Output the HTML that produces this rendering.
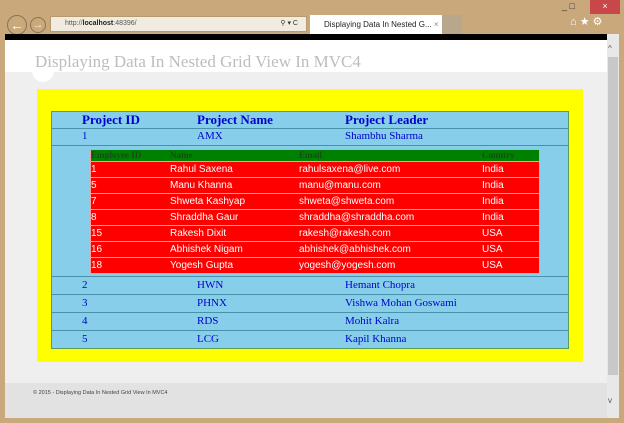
<!DOCTYPE html>
<html><head><style>
*{margin:0;padding:0;box-sizing:border-box}
body{width:624px;height:423px;background:#c9a97b;position:relative;overflow:hidden;font-family:"Liberation Sans",sans-serif}
.abs{position:absolute;white-space:nowrap}
</style></head><body>
<div class="abs" style="left:7px;top:15px;width:20px;height:20px;border:1px solid #8a7350;border-radius:50%;color:#fff;font-size:14px;text-align:center;line-height:18px">&#8592;</div>
<div class="abs" style="left:30px;top:17px;width:16px;height:16px;border:1px solid #8a7350;border-radius:50%;color:#eee;font-size:11px;text-align:center;line-height:14px">&#8594;</div>
<div class="abs" style="left:50px;top:16px;width:257px;height:16px;background:#f2ece0;border:1px solid #b89a70;font-size:7px;color:#555;line-height:14px;padding-left:14px">http://<b style="color:#222">localhost</b>:48396/<span style="position:absolute;right:8px;color:#333">&#9906; ▾ C</span></div>
<div class="abs" style="left:310px;top:15px;width:132px;height:20px;background:#fff;font-size:8px;color:#222;line-height:20px;padding-left:14px">Displaying Data In Nested G... <span style="color:#888">×</span></div>
<div class="abs" style="left:442px;top:15px;width:20px;height:20px;background:#b9a78c"></div>
<div class="abs" style="left:590px;top:0;width:30px;height:14px;background:#c8484a;color:#fff;font-size:9px;text-align:center;line-height:13px">×</div>
<div class="abs" style="left:570px;top:15px;color:#fff;font-size:11px">⌂ ★ ⚙</div>
<div class="abs" style="left:562px;top:1px;color:#333;font-size:9px">_ &#9633;</div>
<div class="abs" style="left:5px;top:34px;width:602px;height:6px;background:#000"></div>
<div class="abs" style="left:5px;top:40px;width:602px;height:32px;background:#fff"></div>
<div class="abs" style="left:5px;top:72px;width:602px;height:311px;background:#efefef"></div>
<div class="abs" style="left:32px;top:60px;width:22px;height:22px;border-radius:50%;background:#fff"></div>
<div class="abs" style="left:35px;top:52px;font-family:'Liberation Serif',serif;font-size:17px;color:#bdbdbd">Displaying Data In Nested Grid View In MVC4</div>
<div class="abs" style="left:5px;top:383px;width:602px;height:35px;background:#e2e2e2"></div>
<div class="abs" style="left:33px;top:390px;font-size:5.5px;color:#444">© 2015 - Displaying Data In Nested Grid View In MVC4</div>
<div class="abs" style="left:607px;top:34px;width:12px;height:384px;background:#e8e8e8"></div>
<div class="abs" style="left:608px;top:57px;width:10px;height:318px;background:#c8c8c8"></div>
<div class="abs" style="left:608px;top:44px;font-size:8px;color:#555">^</div>
<div class="abs" style="left:608px;top:396px;font-size:8px;color:#555">v</div>
<div class="abs" style="left:37px;top:89px;width:546px;height:273px;background:#ffff00"></div>
<div class="abs" style="left:51px;top:111px;width:518px;height:238px;background:#87ceeb;border:1px solid #5a9a5a"></div>
<div class="abs" style="font-family:'Liberation Serif',serif;color:#0000cc;left:0;top:0">
<div class="abs" style="left:82px;top:112px;font-size:13px;font-weight:bold">Project ID</div>
<div class="abs" style="left:197px;top:112px;font-size:13px;font-weight:bold">Project Name</div>
<div class="abs" style="left:345px;top:112px;font-size:13px;font-weight:bold">Project Leader</div>
<div class="abs" style="left:52px;top:128px;width:516px;height:1px;background:#4a90a8"></div>
<div class="abs" style="left:82px;top:130px;font-size:11px">1</div>
<div class="abs" style="left:197px;top:130px;font-size:11px">AMX</div>
<div class="abs" style="left:345px;top:130px;font-size:11px">Shambhu Sharma</div>
<div class="abs" style="left:52px;top:145px;width:516px;height:1px;background:#4a90a8"></div>
<div class="abs" style="left:52px;top:276px;width:516px;height:1px;background:#4a90a8"></div>
<div class="abs" style="left:52px;top:294px;width:516px;height:1px;background:#4a90a8"></div>
<div class="abs" style="left:52px;top:312px;width:516px;height:1px;background:#4a90a8"></div>
<div class="abs" style="left:52px;top:330px;width:516px;height:1px;background:#4a90a8"></div>
<div class="abs" style="left:82px;top:279px;font-size:11px">2</div><div class="abs" style="left:197px;top:279px;font-size:11px">HWN</div><div class="abs" style="left:345px;top:279px;font-size:11px">Hemant Chopra</div>
<div class="abs" style="left:82px;top:297px;font-size:11px">3</div><div class="abs" style="left:197px;top:297px;font-size:11px">PHNX</div><div class="abs" style="left:345px;top:297px;font-size:11px">Vishwa Mohan Goswami</div>
<div class="abs" style="left:82px;top:315px;font-size:11px">4</div><div class="abs" style="left:197px;top:315px;font-size:11px">RDS</div><div class="abs" style="left:345px;top:315px;font-size:11px">Mohit Kalra</div>
<div class="abs" style="left:82px;top:333px;font-size:11px">5</div><div class="abs" style="left:197px;top:333px;font-size:11px">LCG</div><div class="abs" style="left:345px;top:333px;font-size:11px">Kapil Khanna</div>
</div>
<div class="abs" style="left:90px;top:149px;width:450px;height:125px;background:#f0a0a0"></div>
<div class="abs" style="left:91px;top:150px;width:448px;height:11px;background:#008000;font-family:'Liberation Serif',serif;font-size:9px;font-weight:bold;color:#1a4a1a;line-height:11px">
<span class="abs" style="left:0">Employee ID</span><span class="abs" style="left:79px">Name</span><span class="abs" style="left:208px">Email</span><span class="abs" style="left:391px">Country</span></div>
<div class="abs" style="left:91px;top:162px;width:448px;font-size:10px;color:#fff">
<div style="position:relative;height:15px;background:#f00;line-height:15px"><span class="abs" style="left:0">1</span><span class="abs" style="left:79px">Rahul Saxena</span><span class="abs" style="left:208px">rahulsaxena@live.com</span><span class="abs" style="left:391px">India</span></div>
<div style="position:relative;height:15px;background:#f00;margin-top:1px;line-height:15px"><span class="abs" style="left:0">5</span><span class="abs" style="left:79px">Manu Khanna</span><span class="abs" style="left:208px">manu@manu.com</span><span class="abs" style="left:391px">India</span></div>
<div style="position:relative;height:15px;background:#f00;margin-top:1px;line-height:15px"><span class="abs" style="left:0">7</span><span class="abs" style="left:79px">Shweta Kashyap</span><span class="abs" style="left:208px">shweta@shweta.com</span><span class="abs" style="left:391px">India</span></div>
<div style="position:relative;height:15px;background:#f00;margin-top:1px;line-height:15px"><span class="abs" style="left:0">8</span><span class="abs" style="left:79px">Shraddha Gaur</span><span class="abs" style="left:208px">shraddha@shraddha.com</span><span class="abs" style="left:391px">India</span></div>
<div style="position:relative;height:15px;background:#f00;margin-top:1px;line-height:15px"><span class="abs" style="left:0">15</span><span class="abs" style="left:79px">Rakesh Dixit</span><span class="abs" style="left:208px">rakesh@rakesh.com</span><span class="abs" style="left:391px">USA</span></div>
<div style="position:relative;height:15px;background:#f00;margin-top:1px;line-height:15px"><span class="abs" style="left:0">16</span><span class="abs" style="left:79px">Abhishek Nigam</span><span class="abs" style="left:208px">abhishek@abhishek.com</span><span class="abs" style="left:391px">USA</span></div>
<div style="position:relative;height:15px;background:#f00;margin-top:1px;line-height:15px"><span class="abs" style="left:0">18</span><span class="abs" style="left:79px">Yogesh Gupta</span><span class="abs" style="left:208px">yogesh@yogesh.com</span><span class="abs" style="left:391px">USA</span></div>
</div>
</body></html>
